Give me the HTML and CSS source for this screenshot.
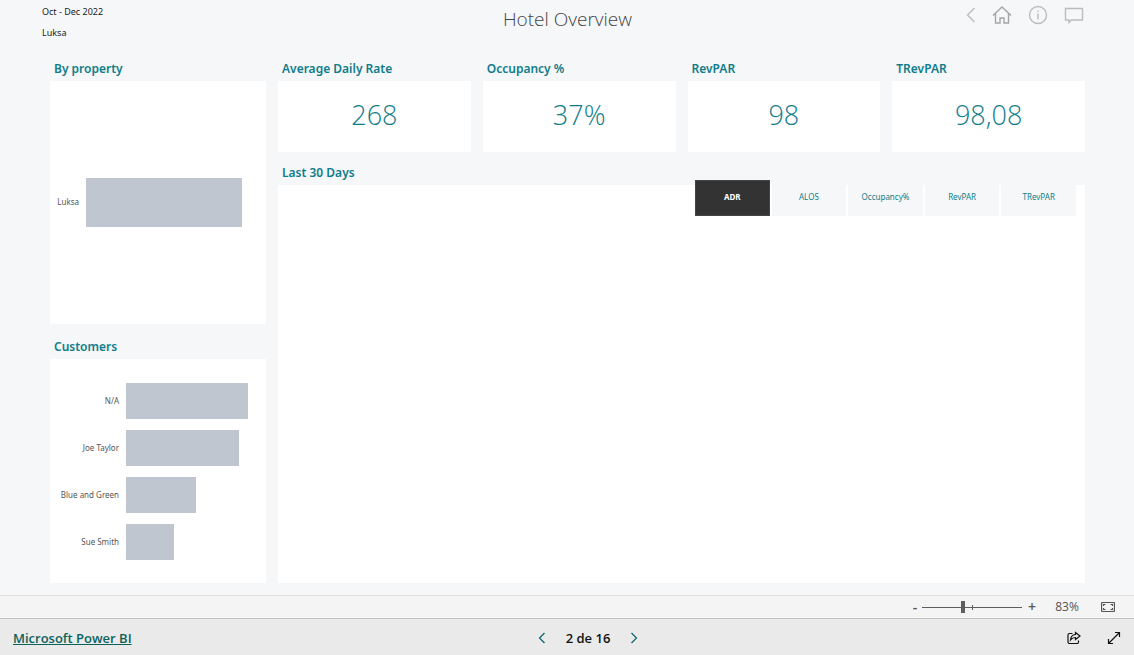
FILE: index.html
```html
<!DOCTYPE html>
<html lang="en">
<head>
<meta charset="utf-8">
<meta name="viewport" content="width=device-width, initial-scale=1">
<title>Hotel Overview</title>
<link rel="stylesheet" href="styles.css">
</head>
<body>
<main class="report">
  <header class="report-header">
    <div class="scope">
      <p>Oct - Dec 2022</p>
      <p>Luksa</p>
    </div>
    <h1 class="report-title">Hotel Overview</h1>
    <nav class="report-nav" aria-label="Report">
      <button class="icon-button" type="button" aria-label="Back"><svg width="10" height="16" viewBox="0 0 10 16"><path d="M8.500 1 1.500 8l7 7"/></svg></button>
      <button class="icon-button home" type="button" aria-label="Home"><svg width="20" height="18" viewBox="0 0 20 18"><path d="M1 9.500 10 1l9 8.500M3.500 7.500v9.500H8v-5h4v5h4.500V7.500"/></svg></button>
      <button class="icon-button" type="button" aria-label="Information"><svg width="20" height="20" viewBox="0 0 20 20"><circle cx="10" cy="10" r="8.500"/><path d="M10 8.500v6M10 5.500v1.500"/></svg></button>
      <button class="icon-button" type="button" aria-label="Comments"><svg width="20" height="18" viewBox="0 0 20 18"><path d="M1.500 2.500h17v11.500H7.500L5 16.500V14H1.500z"/></svg></button>
    </nav>
  </header>

  <div class="dashboard">
    <div class="side">
      <section class="tile property">
        <h2>By property</h2>
        <div class="panel chart">
          <div class="row"><span class="label">Luksa</span><span class="track"><span class="bar" style="width:100%"></span></span></div>
        </div>
      </section>
      <section class="tile customers">
        <h2>Customers</h2>
        <div class="panel chart">
          <div class="row"><span class="label">N/A</span><span class="track"><span class="bar" style="width:100%"></span></span></div>
          <div class="row"><span class="label">Joe Taylor</span><span class="track"><span class="bar" style="width:93%"></span></span></div>
          <div class="row"><span class="label">Blue and Green</span><span class="track"><span class="bar" style="width:57%"></span></span></div>
          <div class="row"><span class="label">Sue Smith</span><span class="track"><span class="bar" style="width:39%"></span></span></div>
        </div>
      </section>
    </div>

    <div class="content">
      <div class="kpis">
        <section class="tile"><h2>Average Daily Rate</h2><p class="panel value">268</p></section>
        <section class="tile"><h2>Occupancy %</h2><p class="panel value">37%</p></section>
        <section class="tile"><h2>RevPAR</h2><p class="panel value">98</p></section>
        <section class="tile"><h2>TRevPAR</h2><p class="panel value">98,08</p></section>
      </div>
      <section class="tile trend">
        <h2>Last 30 Days</h2>
        <div class="panel trend-panel">
          <div class="tabs">
            <button class="tab selected" type="button" aria-pressed="true">ADR</button>
            <button class="tab" type="button" aria-pressed="false">ALOS</button>
            <button class="tab" type="button" aria-pressed="false">Occupancy%</button>
            <button class="tab" type="button" aria-pressed="false">RevPAR</button>
            <button class="tab" type="button" aria-pressed="false">TRevPAR</button>
          </div>
        </div>
      </section>
    </div>
  </div>
</main>

<div class="zoom-bar">
  <button class="zoom-step" type="button" aria-label="Zoom out">-</button>
  <input class="zoom-range" type="range" min="0" max="100" value="41" aria-label="Zoom">
  <button class="zoom-step" type="button" aria-label="Zoom in">+</button>
  <span class="zoom-value">83%</span>
  <button class="icon-button fit" type="button" aria-label="Fit to page"><svg width="14" height="10" viewBox="0 0 14 10"><rect x=".5" y=".5" width="13" height="9" rx="1"/><path d="M2.500 4V2.500H4.500M9.500 2.500h2V4M11.500 6v1.500h-2M4.500 7.500h-2V6"/></svg></button>
</div>

<footer class="status-bar">
  <a class="brand" href="#">Microsoft Power BI</a>
  <nav class="pager" aria-label="Pages">
    <button class="icon-button" type="button" aria-label="Previous page"><svg width="8" height="12" viewBox="0 0 8 12"><path d="M6.500 1 1.500 6l5 5"/></svg></button>
    <span class="page">2 de 16</span>
    <button class="icon-button" type="button" aria-label="Next page"><svg width="8" height="12" viewBox="0 0 8 12"><path d="m1.500 1 5 5-5 5"/></svg></button>
  </nav>
  <div class="actions">
    <button class="icon-button" type="button" aria-label="Share"><svg width="14" height="14" viewBox="0 0 14 14"><path d="M5.500 2.500H2.500a1.500 1.500 0 0 0-1.500 1.500v7A1.500 1.500 0 0 0 2.500 12.500h7.500a1.500 1.500 0 0 0 1.500-1.500V9.500"/><path d="M8.500 1.500 13 5 8.500 8.500V6.500C6.500 6.500 5 7 3.500 9 3.800 6 5.500 3.700 8.500 3.500z"/></svg></button>
    <button class="icon-button" type="button" aria-label="Full screen"><svg width="14" height="14" viewBox="0 0 14 14"><path d="M1.500 12.500l11-11M8 1.500h4.500V6M1.500 8v4.500H6"/></svg></button>
  </div>
</footer>
</body>
</html>
```

FILE: styles.css
```css
* {
  box-sizing: border-box;
}

body {
  margin: 0;
  min-height: 100vh;
  display: flex;
  flex-direction: column;
  background: #f5f7f9;
  color: #222;
  font-family: "Open Sans", "Noto Sans", sans-serif;
}

h1, h2, p {
  margin: 0;
}

button {
  margin: 0;
  padding: 0;
  border: 0;
  background: none;
  color: inherit;
  font: inherit;
  cursor: pointer;
}

.icon-button {
  display: flex;
}

svg {
  display: block;
  fill: none;
  stroke: currentColor;
  stroke-width: 1.2;
}

.report {
  flex: 1;
  display: flex;
  flex-direction: column;
  padding: 0 49px 12px 50px;
}

.report-header {
  display: grid;
  grid-template-columns: 1fr auto 1fr;
  align-items: start;
  height: 57px;
}

.scope {
  margin-left: -8px;
  padding-top: 1px;
  font-family: "Noto Sans", "Open Sans", sans-serif;
  font-size: 9px;
  line-height: 21px;
}

.report-title {
  padding-top: 5px;
  color: #444;
  font-size: 19px;
  font-weight: 300;
  line-height: 28px;
}

.report-nav {
  display: flex;
  align-items: center;
  justify-content: flex-end;
  gap: 16px;
  padding: 5px 1px 0 0;
  color: #bcbcbc;
}

.report-nav svg {
  stroke-width: 1.4;
}

.report-nav .home {
  color: #a6a6a6;
}

.dashboard {
  flex: 1;
  display: grid;
  grid-template-columns: 216fr 807fr;
  gap: 12px;
}

.side,
.content,
.tile {
  display: flex;
  flex-direction: column;
}

.side {
  gap: 11px;
}

.content {
  gap: 9px;
}

.property {
  flex: 268;
}

.customers {
  flex: 249;
}

.tile h2 {
  padding-left: 4px;
  color: #0f7c8a;
  font-family: "Noto Sans", "Open Sans", sans-serif;
  font-size: 12px;
  font-weight: 600;
  line-height: 24px;
}

.panel {
  flex: 1;
  background: #fff;
}

.chart {
  display: flex;
  flex-direction: column;
  justify-content: center;
  gap: 11px;
}

.customers .chart {
  padding-top: 1px;
}

.row {
  display: flex;
  align-items: center;
  gap: 7px;
  height: 36px;
  padding-right: 18px;
}

.property .row {
  height: 49px;
  padding-right: 24px;
}

.label {
  width: 69px;
  color: #555;
  font-family: "Noto Sans", "Open Sans", sans-serif;
  font-size: 8px;
  line-height: 12px;
  text-align: right;
  white-space: nowrap;
}

.property .label {
  width: 29px;
}

.track {
  flex: 1;
  height: 100%;
}

.bar {
  display: block;
  height: 100%;
  background: #bfc6d0;
}

.kpis {
  display: grid;
  grid-template-columns: repeat(4, 1fr);
  gap: 12px;
}

.value {
  padding: 14px 0 17px;
  color: #0f7c8a;
  font-size: 27px;
  font-weight: 300;
  line-height: 40px;
  text-align: center;
}

.trend {
  flex: 1;
}

.trend-panel {
  position: relative;
}

.tabs {
  position: absolute;
  top: -5px;
  right: 9px;
  width: 381px;
  display: grid;
  grid-template-columns: repeat(5, 1fr);
  gap: 2px;
}

.tab {
  height: 36px;
  padding-bottom: 3px;
  background: #f5f7f9;
  color: #0f7c8a;
  font-family: "Noto Sans", "Open Sans", sans-serif;
  font-size: 8px;
}

.tab.selected {
  border: 1px solid #444;
  background: #333;
  color: #fff;
  font-weight: 700;
}

.zoom-bar {
  display: flex;
  align-items: center;
  justify-content: flex-end;
  height: 23px;
  padding-right: 19px;
  border-top: 1px solid #dedede;
  background: #f4f4f4;
  color: #555;
}

.zoom-step {
  width: 14px;
  font-size: 14px;
  font-weight: 600;
  line-height: 20px;
}

.zoom-range {
  appearance: none;
  width: 100px;
  height: 12px;
  margin: 0 3px 0 0;
  background:
    linear-gradient(#605e5c, #605e5c) 50px 50% / 1px 5px no-repeat,
    linear-gradient(#605e5c, #605e5c) 0 50% / 100% 1px no-repeat;
}

.zoom-range::-webkit-slider-thumb {
  appearance: none;
  width: 4px;
  height: 12px;
  background: #605e5c;
}

.zoom-value {
  width: 56px;
  font-size: 12px;
  line-height: 20px;
  text-align: center;
}

.zoom-bar .fit {
  margin-left: 6px;
}

.status-bar {
  display: grid;
  grid-template-columns: 1fr auto 1fr;
  align-items: center;
  height: 37px;
  padding: 2px 13px 0;
  border-top: 1px solid #c4c4c4;
  background: #eaeaea;
  color: #111;
}

.brand {
  justify-self: start;
  color: #0b625b;
  font-size: 13px;
  font-weight: 600;
  line-height: 20px;
}

.pager {
  display: flex;
  align-items: center;
  gap: 20px;
  padding-left: 42px;
}

.pager .icon-button {
  color: #0b626b;
}

.page {
  font-size: 13px;
  font-weight: 600;
  line-height: 20px;
}

.actions {
  display: flex;
  justify-content: flex-end;
  gap: 26px;
}
```
